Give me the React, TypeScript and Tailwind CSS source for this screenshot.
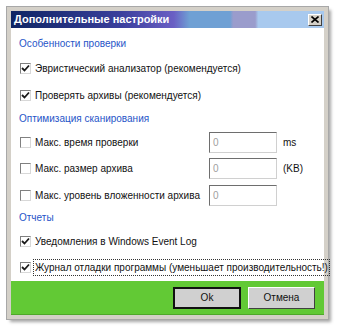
import React from 'react';

const font = { fontFamily: '"Liberation Sans", Arial, sans-serif' };

function Check({ checked }: { checked: boolean }) {
  return (
    <span className="flex h-[11px] w-[11px] shrink-0 items-center justify-center border border-t-[#808080] border-l-[#808080] border-r-[#d8d8d8] border-b-[#d8d8d8] bg-white">
      {checked && (
        <svg width="9" height="9" viewBox="0 0 9 9">
          <path d="M1 4 L3.5 6.5 L8 1.5" stroke="#1a1a1a" strokeWidth="1.8" fill="none" />
        </svg>
      )}
    </span>
  );
}

function Row({ h, checked, label, focus }: { h: string; checked: boolean; label: string; focus?: boolean }) {
  return (
    <div className={`flex items-center gap-[3px] pl-[9px] ${h}`}>
      <Check checked={checked} />
      <span className={`whitespace-nowrap px-[1px] ${focus ? 'outline outline-1 outline-dotted outline-[#333]' : ''}`}>{label}</span>
    </div>
  );
}

function LimitRow({ h, label, unit }: { h: string; label: string; unit?: string }) {
  return (
    <div className={`flex items-center pl-[9px] ${h}`}>
      <div className="flex w-[189px] items-center gap-[3px]">
        <Check checked={false} />
        <span className="whitespace-nowrap px-[1px]">{label}</span>
      </div>
      <div className="flex h-[21px] w-[68px] items-center border border-t-[#6e6e6e] border-l-[#6e6e6e] border-r-[#d0d0d0] border-b-[#d0d0d0] bg-white pl-[3px] text-[#a0a0a0]">
        0
      </div>
      {unit && <span className="ml-[6px]">{unit}</span>}
    </div>
  );
}

function Header({ h, text }: { h: string; text: string }) {
  return (
    <div className={`flex items-center pl-[8px] text-[#1f55c8] ${h}`}>{text}</div>
  );
}

export default function App() {
  return (
    <div className="h-[328px] w-[338px] overflow-hidden bg-white pl-[7px] pt-[7px] text-[10px] text-[#111]" style={font}>
      <div className="flex h-[312px] w-[321px] flex-col border-[4px] border-[#d4d0c8] shadow-[3px_3px_3px_rgba(0,0,0,0.35)] outline outline-1 outline-[#a8a8a8]">
        <div className="flex h-[17px] items-center bg-[linear-gradient(90deg,#0e2563_0%,#3a3f9c_35%,#6a5fc4_52%,#6fa0d4_57%,#6fa0d4_70%,#9a9ccc_71%,#9a9ccc_78%,#a8c9ee_79%,#a8c9ee_100%)] pl-[3px] pr-[2px]">
          <span className="text-[11px] font-bold text-white">Дополнительные настройки</span>
          <span className="ml-auto flex h-[12px] w-[14px] items-center justify-center border border-t-white border-l-white border-r-[#404040] border-b-[#404040] bg-[#d4d0c8]">
            <svg width="8" height="7" viewBox="0 0 8 7">
              <path d="M0.5 0.5 L7.5 6.5 M7.5 0.5 L0.5 6.5" stroke="#000" strokeWidth="1.6" />
            </svg>
          </span>
        </div>
        <div className="flex flex-1 flex-col bg-white pt-[5px]">
          <Header h="h-[20px]" text="Особенности проверки" />
          <Row h="h-[30px]" checked label="Эвристический анализатор (рекомендуется)" />
          <Row h="h-[24px]" checked label="Проверять архивы (рекомендуется)" />
          <Header h="h-[22px]" text="Оптимизация сканирования" />
          <LimitRow h="h-[26px]" label="Макс. время проверки" unit="ms" />
          <LimitRow h="h-[26px]" label="Макс. размер архива" unit="(KB)" />
          <LimitRow h="h-[28px]" label="Макс. уровень вложенности архива" />
          <Header h="h-[16px]" text="Отчеты" />
          <Row h="h-[32px]" checked label="Уведомления в Windows Event Log" />
          <Row h="h-[20px]" checked focus label="Журнал отладки программы (уменьшает производительность!)" />
        </div>
        <div className="flex h-[34px] items-center justify-end gap-[7px] border-b border-[#4fa82a] bg-[#62c935] pr-[9px]">
          <button className="h-[22px] w-[68px] border-2 border-[#111] bg-[#d0d0d0] text-[10px] text-[#111]">Ok</button>
          <button className="h-[22px] w-[67px] border border-t-white border-l-white border-r-[#404040] border-b-[#404040] bg-[#d0d0d0] text-[10px] text-[#111]">Отмена</button>
        </div>
      </div>
    </div>
  );
}
